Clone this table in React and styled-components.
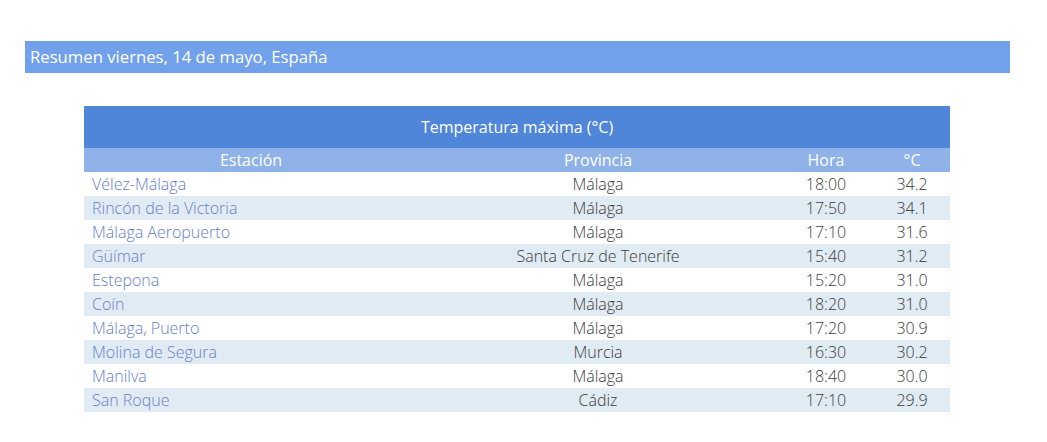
import React from "react";
import styled, { createGlobalStyle } from "styled-components";

const Global = createGlobalStyle`
  html, body { margin: 0; padding: 0; background: #fff; }
  body { font-family: "Open Sans", "Liberation Sans", sans-serif; }
`;

const Page = styled.div`
  padding: 41px 37px 0 25px;
`;

const TitleBar = styled.div`
  height: 32px;
  background: #72a1eb;
  color: #fff;
  font-size: 16.7px;
  line-height: 32px;
  padding-left: 5px;
`;

const TableWrap = styled.div`
  margin: 33px 0 0 59px;
  width: 866px;
`;

const Table = styled.table`
  width: 866px;
  border-collapse: collapse;
  table-layout: fixed;
  font-size: 16px;
`;

const Caption = styled.th`
  background: #4f86d9;
  color: #fff;
  font-weight: 400;
  font-size: 16px;
  height: 42px;
  padding: 0;
  text-align: center;
`;

const HeadCell = styled.th`
  background: #8fb2e8;
  color: #fff;
  font-weight: 400;
  font-size: 16px;
  height: 24px;
  padding: 0;
  text-align: center;
`;

const Row = styled.tr`
  background: ${(p) => (p.$stripe ? "#e1ebf4" : "#fff")};
`;

const Cell = styled.td`
  height: 24px;
  padding: 0 ${(p) => (p.$left ? "8px" : "0")};
  text-align: ${(p) => (p.$left ? "left" : "center")};
  font-weight: 300;
  line-height: 24px;
  color: ${(p) => (p.$link ? "#6680c8" : "#3a3a3a")};
  white-space: nowrap;
`;

const data = [
  ["Vélez-Málaga", "Málaga", "18:00", "34.2"],
  ["Rincón de la Victoria", "Málaga", "17:50", "34.1"],
  ["Málaga Aeropuerto", "Málaga", "17:10", "31.6"],
  ["Güímar", "Santa Cruz de Tenerife", "15:40", "31.2"],
  ["Estepona", "Málaga", "15:20", "31.0"],
  ["Coín", "Málaga", "18:20", "31.0"],
  ["Málaga, Puerto", "Málaga", "17:20", "30.9"],
  ["Molina de Segura", "Murcia", "16:30", "30.2"],
  ["Manilva", "Málaga", "18:40", "30.0"],
  ["San Roque", "Cádiz", "17:10", "29.9"],
];

export default function App() {
  return (
    <>
      <Global />
      <Page>
        <TitleBar>Resumen viernes, 14 de mayo, España</TitleBar>
        <TableWrap>
          <Table>
            <colgroup>
              <col style={{ width: 334 }} />
              <col style={{ width: 360 }} />
              <col style={{ width: 96 }} />
              <col style={{ width: 76 }} />
            </colgroup>
            <thead>
              <tr>
                <Caption colSpan={4}>Temperatura máxima (°C)</Caption>
              </tr>
              <tr>
                <HeadCell>Estación</HeadCell>
                <HeadCell>Provincia</HeadCell>
                <HeadCell>Hora</HeadCell>
                <HeadCell>°C</HeadCell>
              </tr>
            </thead>
            <tbody>
              {data.map((r, i) => (
                <Row key={i} $stripe={i % 2 === 1}>
                  <Cell $left $link>{r[0]}</Cell>
                  <Cell>{r[1]}</Cell>
                  <Cell>{r[2]}</Cell>
                  <Cell>{r[3]}</Cell>
                </Row>
              ))}
            </tbody>
          </Table>
        </TableWrap>
      </Page>
    </>
  );
}
